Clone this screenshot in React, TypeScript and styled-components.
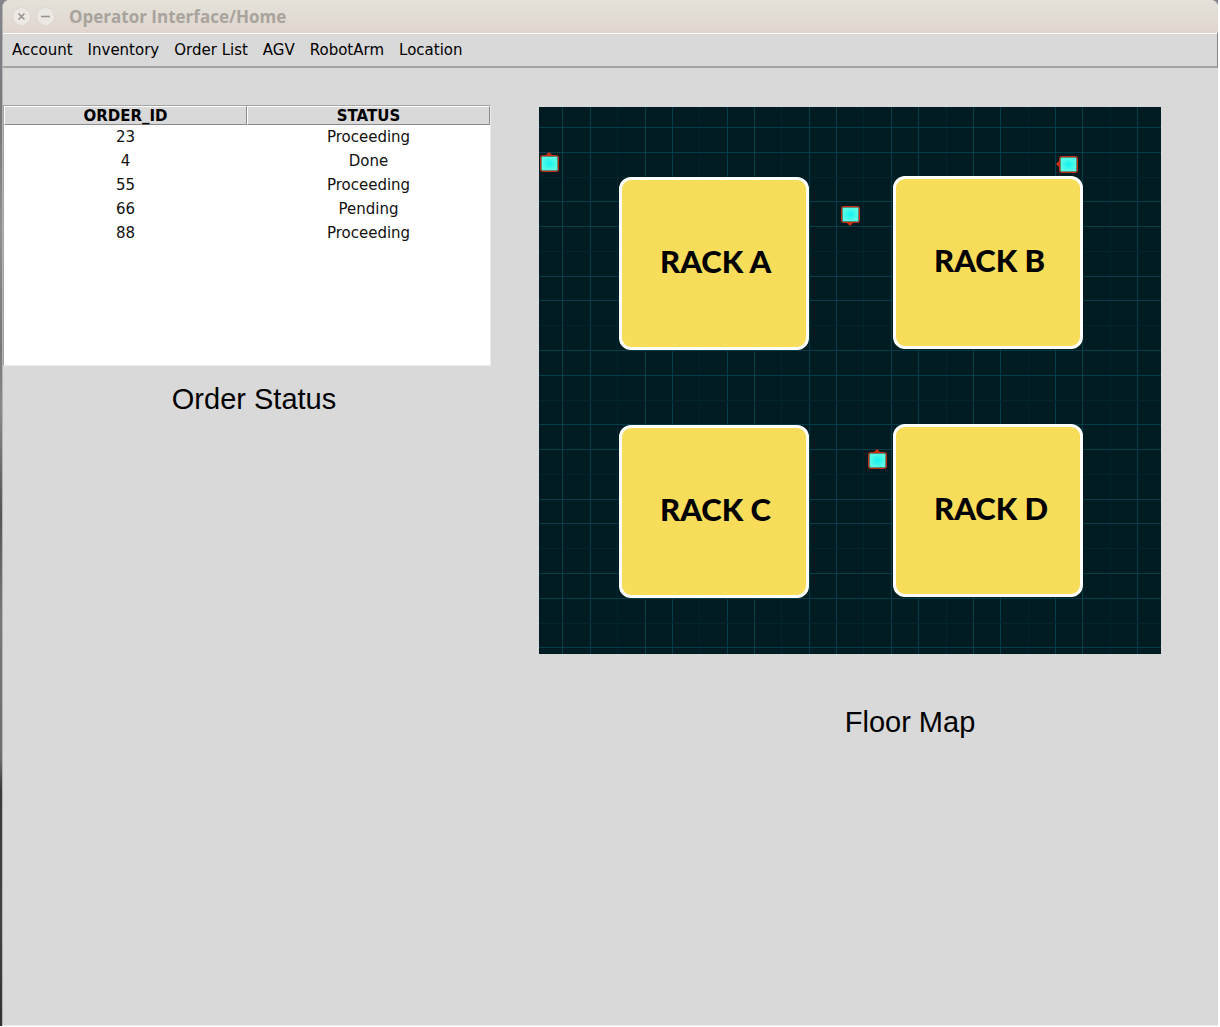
import React from 'react';
import styled, { createGlobalStyle } from 'styled-components';

const GlobalStyle = createGlobalStyle`
  *, *::before, *::after { box-sizing: border-box; }
  body { margin: 0; background: #fff; }
`;

const Desktop = styled.div`
  min-height: 100vh;
  display: flex;
  padding: 0 2px 1px 0;
  font-family: 'DejaVu Sans', sans-serif;
  font-size: 15px;
  color: #000;
`;

const Screen = styled.div`
  flex: 1;
  display: flex;
  padding-left: 2px;
  background: linear-gradient(
    #84858a 0%, #77787c 12%, #8f8f90 22%, #77777a 34%, #8a8a8c 40%,
    #555557 50%, #77787a 60%, #6d6d70 74%, #3a3937 77%, #45423f 90%, #33322f 100%
  );
`;

const Window = styled.div`
  flex: 1;
  min-width: 0;
  display: flex;
  flex-direction: column;
  background: #d9d9d9;
  border-left: 1px solid #b4b4b4;
  border-bottom: 1px solid #ececec;
  border-radius: 7px 7px 0 0;
`;

const TitleBar = styled.header`
  display: flex;
  align-items: center;
  gap: 5px;
  height: 33px;
  padding: 0 9px;
  border-radius: 7px 7px 0 0;
  background: linear-gradient(#e4e1d9, #e2dcd4 50%, #e1d6ce);
  box-shadow: 0 1px 0 #fff;
`;

const WindowButton = styled.button`
  display: flex;
  align-items: center;
  justify-content: center;
  width: 19px;
  height: 19px;
  padding: 0;
  border: 1px solid #dbd6cf;
  border-radius: 50%;
  background: #ece9e5;
`;

const Title = styled.h1`
  margin: 0 0 0 9px;
  font: bold 17px/24px 'Open Sans', sans-serif;
  color: #a9a39d;
`;

const MenuBar = styled.nav`
  display: flex;
  gap: 15px;
  height: 35px;
  padding: 2px 9px 2px;
  border-right: 1px solid #858585;
  border-bottom: 2px solid #a3a3a3;
`;

const MenuItem = styled.button`
  padding: 0;
  border: 0;
  background: none;
  font: inherit;
  line-height: 28px;
  color: inherit;
`;

const Content = styled.main`
  display: grid;
  grid-template-columns: 488fr 622fr;
  column-gap: 48px;
  align-items: start;
  padding: 37px 57px 0 0;
`;

const Panel = styled.section<{ $top?: number }>`
  display: flex;
  flex-direction: column;
  padding-top: ${(p) => p.$top ?? 0}px;
`;

const Caption = styled.h2<{ $indent: number; $gap: number }>`
  margin: ${(p) => p.$gap}px 0 0;
  padding-left: ${(p) => p.$indent}px;
  font: normal 29px/34px 'Liberation Sans', sans-serif;
  text-align: center;
`;

const TreeView = styled.div`
  min-height: 261px;
  border-top: 1px solid #a3a3a3;
  border-left: 1px solid #a3a3a3;
  border-right: 1px solid #ececec;
  border-bottom: 1px solid #ececec;
  background: #fff;
`;

const OrderTable = styled.table`
  width: 100%;
  table-layout: fixed;
  border-collapse: separate;
  border-spacing: 0;
  text-align: center;
`;

const HeadCell = styled.th`
  height: 19px;
  padding: 0;
  line-height: 16px;
  background: #d9d9d9;
  border: 1px solid;
  border-color: #fff #8a8a8a #8a8a8a #fff;
`;

const Cell = styled.td`
  height: 24px;
  padding: 0;
  line-height: 24px;
  color: #111;
`;

const MAP_W = 622;
const MAP_H = 547;
const pctX = (n: number) => `${(n / MAP_W) * 100}%`;
const pctY = (n: number) => `${(n / MAP_H) * 100}%`;

const Map = styled.div`
  position: relative;
  width: 100%;
  aspect-ratio: ${MAP_W} / ${MAP_H};
  background: #001b21;
  overflow: hidden;
`;

const MapGrid = styled.svg`
  display: block;
  width: 100%;
  height: 100%;
`;

const Rack = styled.div<{ $x: number; $y: number }>`
  position: absolute;
  left: ${(p) => pctX(p.$x)};
  top: ${(p) => pctY(p.$y)};
  width: ${pctX(190)};
  height: ${pctY(173)};
  display: flex;
  align-items: center;
  padding: 0 0 6px 38px;
  border: 3px solid #fff;
  border-radius: 12px;
  background: #f8dd5a;
  font: 900 31px/36px Lato, sans-serif;
  white-space: nowrap;
`;

const Robot = styled.svg<{ $x: number; $y: number }>`
  position: absolute;
  left: ${(p) => pctX(p.$x)};
  top: ${(p) => pctY(p.$y)};
  width: 26px;
  height: 26px;
  transform: translate(-50%, -50%);
`;

const menus = ['Account', 'Inventory', 'Order List', 'AGV', 'RobotArm', 'Location'];

const orders = [
  { id: 23, status: 'Proceeding' },
  { id: 4, status: 'Done' },
  { id: 55, status: 'Proceeding' },
  { id: 66, status: 'Pending' },
  { id: 88, status: 'Proceeding' },
];

const racks = [
  { name: 'RACK A', x: 80, y: 70 },
  { name: 'RACK B', x: 354, y: 69 },
  { name: 'RACK C', x: 80, y: 318 },
  { name: 'RACK D', x: 354, y: 317 },
];

type Heading = 'up' | 'down' | 'left';
const robots: { x: number; y: number; heading: Heading }[] = [
  { x: 10, y: 56, heading: 'up' },
  { x: 529, y: 57, heading: 'left' },
  { x: 311, y: 107, heading: 'down' },
  { x: 338, y: 353, heading: 'up' },
];

const arrows: Record<Heading, string> = {
  up: '10,5 13,2 16,5',
  down: '10,22 13,25 16,22',
  left: '4,10 1,13 4,16',
};

// Two bright lines, then a faint one, repeat across the floor in both directions.
const gridLines = (first: number, pitch: number, limit: number) => {
  const lines: { at: number; faint: boolean }[] = [];
  for (let i = 0; first + i * pitch < limit; i++) {
    lines.push({ at: Math.floor(first + i * pitch) + 0.5, faint: i % 3 === 2 });
  }
  return lines;
};

const lineColor = (faint: boolean) => (faint ? '#00252c' : '#033d47');

function FloorMap() {
  return (
    <Map>
      <MapGrid viewBox={`0 0 ${MAP_W} ${MAP_H}`} aria-hidden="true">
        {gridLines(23.9, 27.37, MAP_W).map((l) => (
          <path key={`v${l.at}`} d={`M${l.at} 0V${MAP_H}`} stroke={lineColor(l.faint)} />
        ))}
        {gridLines(20.6, 24.77, MAP_H).map((l) => (
          <path key={`h${l.at}`} d={`M0 ${l.at}H${MAP_W}`} stroke={lineColor(l.faint)} />
        ))}
      </MapGrid>
      {racks.map((r) => (
        <Rack key={r.name} $x={r.x} $y={r.y}>{r.name}</Rack>
      ))}
      {robots.map((r, i) => (
        <Robot key={i} $x={r.x} $y={r.y} viewBox="0 0 26 26" aria-hidden="true">
          <defs>
            <radialGradient id={`glow${i}`}>
              <stop offset="0" stopColor="#12f2f2" />
              <stop offset="1" stopColor="#5cfae4" />
            </radialGradient>
          </defs>
          <polygon points={arrows[r.heading]} fill="#d32f12" />
          <rect x="4.5" y="5.5" width="18" height="16" rx="2" fill="#5a1a10" stroke="#c22c10" />
          <rect x="5.5" y="6.5" width="16" height="14" fill={`url(#glow${i})`} />
        </Robot>
      ))}
    </Map>
  );
}

export default function App() {
  return (
    <Desktop>
      <GlobalStyle />
      <Screen>
        <Window>
          <TitleBar>
            <WindowButton aria-label="Close">
              <svg width="9" height="9" viewBox="0 0 9 9">
                <path d="M1.5 1.5L7.5 7.5M7.5 1.5L1.5 7.5" stroke="#99938b" strokeWidth="1.6" />
              </svg>
            </WindowButton>
            <WindowButton aria-label="Minimize">
              <svg width="9" height="9" viewBox="0 0 9 9">
                <path d="M0 4.5H9" stroke="#99938b" strokeWidth="1.6" />
              </svg>
            </WindowButton>
            <Title>Operator Interface/Home</Title>
          </TitleBar>
          <MenuBar>
            {menus.map((m) => (
              <MenuItem key={m}>{m}</MenuItem>
            ))}
          </MenuBar>
          <Content>
            <Panel>
              <TreeView>
                <OrderTable>
                  <thead>
                    <tr>
                      <HeadCell>ORDER_ID</HeadCell>
                      <HeadCell>STATUS</HeadCell>
                    </tr>
                  </thead>
                  <tbody>
                    {orders.map((o) => (
                      <tr key={o.id}>
                        <Cell>{o.id}</Cell>
                        <Cell>{o.status}</Cell>
                      </tr>
                    ))}
                  </tbody>
                </OrderTable>
              </TreeView>
              <Caption $indent={14} $gap={16}>Order Status</Caption>
            </Panel>
            <Panel $top={2}>
              <FloorMap />
              <Caption $indent={120} $gap={51}>Floor Map</Caption>
            </Panel>
          </Content>
        </Window>
      </Screen>
    </Desktop>
  );
}
